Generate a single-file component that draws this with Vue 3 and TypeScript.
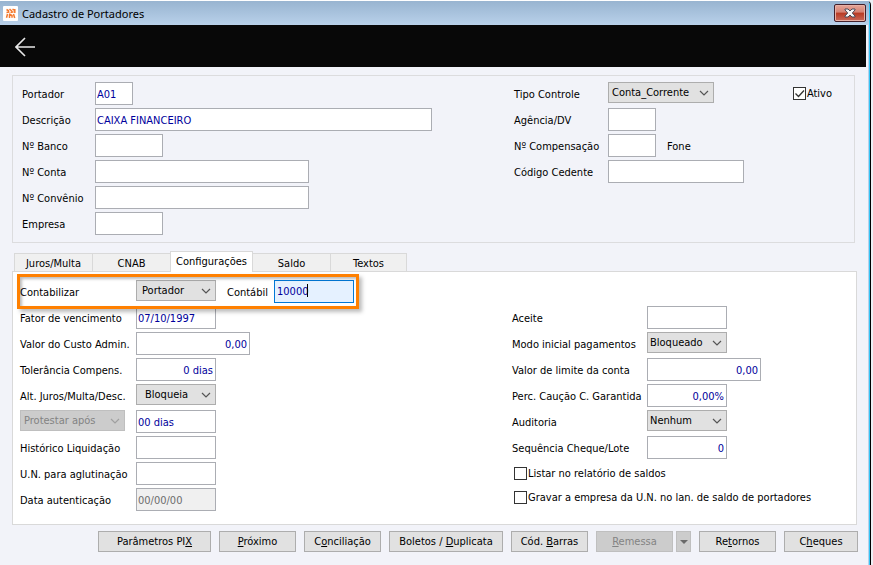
<script setup lang="ts">
import { reactive, ref } from 'vue'

interface Control {
  id: string
  kind: 'text' | 'select' | 'label' | 'check'
  size?: string
  text?: string
  name?: string
  right?: boolean
  disabled?: boolean
  focused?: boolean
  end?: boolean
  indent?: boolean
}
interface Row {
  label?: string
  lead?: Control
  compact?: boolean
  controls: Control[]
}
interface Group {
  id: string
  tabs: boolean
  columns: Row[][]
}

const groups: Group[] = [
  {
    id: 'dados',
    tabs: false,
    columns: [
      [
        { label: 'Portador', controls: [{ id: 'portador', kind: 'text', size: 'w38' }] },
        { label: 'Descrição', controls: [{ id: 'descricao', kind: 'text', size: 'w337' }] },
        { label: 'Nº Banco', controls: [{ id: 'banco', kind: 'text', size: 'w68' }] },
        { label: 'Nº Conta', controls: [{ id: 'conta', kind: 'text', size: 'w214' }] },
        { label: 'Nº Convênio', controls: [{ id: 'convenio', kind: 'text', size: 'w214' }] },
        { label: 'Empresa', controls: [{ id: 'empresa', kind: 'text', size: 'w68' }] },
      ],
      [
        {
          label: 'Tipo Controle',
          controls: [
            { id: 'tipo', kind: 'select', size: 'w106' },
            { id: 'ativo', kind: 'check', text: 'Ativo', end: true },
          ],
        },
        { label: 'Agência/DV', controls: [{ id: 'agencia', kind: 'text', size: 'w48' }] },
        {
          label: 'Nº Compensação',
          controls: [
            { id: 'compensacao', kind: 'text', size: 'w48' },
            { id: 'fone', kind: 'label', text: 'Fone' },
          ],
        },
        { label: 'Código Cedente', controls: [{ id: 'cedente', kind: 'text', size: 'w136' }] },
      ],
    ],
  },
  {
    id: 'config',
    tabs: true,
    columns: [
      [
        {
          label: 'Contabilizar',
          controls: [
            { id: 'contabilizar', kind: 'select', size: 'w80' },
            { id: 'contabil', kind: 'label', text: 'Contábil' },
            { id: 'contabil', kind: 'text', size: 'w80', focused: true },
          ],
        },
        { label: 'Fator de vencimento', controls: [{ id: 'fator', kind: 'text', size: 'w80' }] },
        { label: 'Valor do Custo Admin.', controls: [{ id: 'custo', kind: 'text', size: 'w114', right: true }] },
        { label: 'Tolerância Compens.', controls: [{ id: 'tolerancia', kind: 'text', size: 'w80', right: true }] },
        { label: 'Alt. Juros/Multa/Desc.', controls: [{ id: 'juros', kind: 'select', size: 'w80', indent: true }] },
        {
          lead: { id: 'protestar', kind: 'select', size: 'w105', disabled: true, name: 'Protestar' },
          controls: [{ id: 'dias', kind: 'text', size: 'w80', name: 'Dias para protesto' }],
        },
        { label: 'Histórico Liquidação', controls: [{ id: 'historico', kind: 'text', size: 'w80' }] },
        { label: 'U.N. para aglutinação', controls: [{ id: 'un', kind: 'text', size: 'w80' }] },
        { label: 'Data autenticação', controls: [{ id: 'data', kind: 'text', size: 'w80', disabled: true }] },
      ],
      [
        { label: 'Aceite', controls: [{ id: 'aceite', kind: 'text', size: 'w80' }] },
        { label: 'Modo inicial pagamentos', controls: [{ id: 'modo', kind: 'select', size: 'w80' }] },
        { label: 'Valor de limite da conta', controls: [{ id: 'limite', kind: 'text', size: 'w114', right: true }] },
        { label: 'Perc. Caução C. Garantida', controls: [{ id: 'caucao', kind: 'text', size: 'w80', right: true }] },
        { label: 'Auditoria', controls: [{ id: 'auditoria', kind: 'select', size: 'w80' }] },
        { label: 'Sequência Cheque/Lote', controls: [{ id: 'sequencia', kind: 'text', size: 'w80', right: true }] },
        { compact: true, controls: [{ id: 'listar', kind: 'check', text: 'Listar no relatório de saldos' }] },
        {
          compact: true,
          controls: [{ id: 'gravar', kind: 'check', text: 'Gravar a empresa da U.N. no lan. de saldo de portadores' }],
        },
      ],
    ],
  },
]

const values = reactive<Record<string, string>>({
  portador: 'A01',
  descricao: 'CAIXA FINANCEIRO',
  contabil: '10000',
  fator: '07/10/1997',
  custo: '0,00',
  tolerancia: '0 dias',
  dias: '00 dias',
  data: '00/00/00',
  limite: '0,00',
  caucao: '0,00%',
  sequencia: '0',
  tipo: 'Conta_Corrente',
  contabilizar: 'Portador',
  juros: 'Bloqueia',
  protestar: 'Protestar após',
  modo: 'Bloqueado',
  auditoria: 'Nenhum',
})
const options: Record<string, string[]> = {
  tipo: ['Conta_Corrente'],
  contabilizar: ['Portador'],
  juros: ['Bloqueia'],
  protestar: ['Protestar após'],
  modo: ['Bloqueado'],
  auditoria: ['Nenhum'],
}
const checks = reactive<Record<string, boolean>>({ ativo: true, listar: false, gravar: false })

const tabs = ['Juros/Multa', 'CNAB', 'Configurações', 'Saldo', 'Textos']
const activeTab = ref('Configurações')

/* Each caption is split around its underlined access key. */
const actions = [
  { parts: ['Parâmetros PI', 'X', ''], size: 'w113' },
  { parts: ['', 'P', 'róximo'], size: 'w77' },
  { parts: ['C', 'o', 'nciliação'], size: 'w77' },
  { parts: ['Boletos / ', 'D', 'uplicata'], size: 'w114' },
  { parts: ['Cód. ', 'B', 'arras'], size: 'w77' },
  { parts: ['', 'R', 'emessa'], size: 'w77', disabled: true, menu: true },
  { parts: ['Re', 't', 'ornos'], size: 'w77' },
  { parts: ['C', 'h', 'eques'], size: 'w74' },
]
</script>

<template>
  <div class="window">
    <header class="titlebar">
      <svg class="logo" viewBox="0 0 15 15" aria-hidden="true">
        <rect width="15" height="15" rx="1" fill="#fff" />
        <path
          d="M3.500 3.500l2.500 1.500M6.500 3l2.500 2.200M9.500 3.200L12 4.500M3.500 6.500l3-.5M7.500 6.500l3-.8M11.800 3v4M3.500 11.800l1-3.800M6.500 12V9M6 8l3 1.500M9 11.800V9M11.700 12L10.500 8"
          fill="none"
          stroke="#f47a30"
          stroke-width="1.500"
        />
      </svg>
      <h1>Cadastro de Portadores</h1>
      <button class="close" type="button" aria-label="Fechar">
        <svg viewBox="0 0 12 10" aria-hidden="true">
          <path d="M1 1h3l2 2 2-2h3v1L8.300 5 11 8v1H8L6 7 4 9H1V8l2.700-3L1 2z" fill="#f8f8f8" stroke="#4b4c5a" stroke-width="1" />
        </svg>
      </button>
    </header>
    <div class="toolbar">
      <button class="back" type="button" aria-label="Voltar">
        <svg viewBox="0 0 20 20" aria-hidden="true">
          <path d="M10 1L1 10l9 9M1 10h19" fill="none" stroke="#e8e8e8" stroke-width="1.600" />
        </svg>
      </button>
    </div>

    <main class="content">
      <section v-for="group in groups" :key="group.id" :class="['group', group.id]">
        <div v-if="group.tabs" class="tabs" role="tablist">
          <button
            v-for="tab in tabs"
            :key="tab"
            type="button"
            role="tab"
            :aria-selected="tab === activeTab"
            :class="['tab', { active: tab === activeTab }]"
            @click="activeTab = tab"
          >{{ tab }}</button>
        </div>
        <div class="box">
          <div v-for="(rows, c) in group.columns" :key="c" :class="['column', c ? 'second' : 'first']">
            <div v-for="(row, r) in rows" :key="r" :class="['row', { compact: row.compact }]">
              <div v-if="row.lead" class="lead">
                <div :class="['dropdown', row.lead.size, { disabled: row.lead.disabled }]">
                  <select :id="row.lead.id" v-model="values[row.lead.id]" :aria-label="row.lead.name" :disabled="row.lead.disabled">
                    <option v-for="o in options[row.lead.id]" :key="o">{{ o }}</option>
                  </select>
                  <svg viewBox="0 0 10 6" aria-hidden="true"><path d="M1 1l4 4 4-4" /></svg>
                </div>
              </div>
              <label v-else-if="row.label" class="lead" :for="row.controls[0].id">{{ row.label }}</label>
              <template v-for="f in row.controls" :key="f.kind + f.id">
                <div v-if="f.kind === 'text'" :class="['field', f.size]">
                  <input
                    :id="f.id"
                    v-model="values[f.id]"
                    type="text"
                    :aria-label="f.name"
                    :disabled="f.disabled"
                    :class="{ right: f.right, focused: f.focused }"
                  />
                  <span v-if="f.focused" class="caret"></span>
                </div>
                <div v-else-if="f.kind === 'select'" :class="['dropdown', f.size, { indent: f.indent }]">
                  <select :id="f.id" v-model="values[f.id]">
                    <option v-for="o in options[f.id]" :key="o">{{ o }}</option>
                  </select>
                  <svg viewBox="0 0 10 6" aria-hidden="true"><path d="M1 1l4 4 4-4" /></svg>
                </div>
                <label v-else-if="f.kind === 'label'" class="inline-label" :for="f.id">{{ f.text }}</label>
                <label v-else :class="['check', { end: f.end }]">
                  <input v-model="checks[f.id]" type="checkbox" />
                  <svg viewBox="0 0 13 13" aria-hidden="true">
                    <path v-if="checks[f.id]" d="M2.500 6.500l3 3 5.500-6" />
                  </svg>
                  <span>{{ f.text }}</span>
                </label>
              </template>
            </div>
          </div>
          <div v-if="group.tabs" class="highlight"></div>
        </div>
      </section>
    </main>

    <footer class="actions">
      <template v-for="a in actions" :key="a.parts.join('')">
        <div class="action-set">
          <button type="button" :class="['action', a.size]" :disabled="a.disabled">
            {{ a.parts[0] }}<u>{{ a.parts[1] }}</u>{{ a.parts[2] }}
          </button>
          <button v-if="a.menu" type="button" class="action more" disabled aria-label="Opções de remessa">
            <svg viewBox="0 0 8 4" aria-hidden="true"><path d="M0 0h8L4 4z" fill="#6a6a6a" /></svg>
          </button>
        </div>
      </template>
    </footer>
  </div>
</template>

<style>
body {
  background: #eef0f5;
}
</style>

<style scoped>
* {
  box-sizing: border-box;
}
.window {
  display: flex;
  flex-direction: column;
  min-height: 100vh;
  margin-right: 2px;
  border-top: 1px solid #fff;
  border-right: 1px solid #000;
  border-top-right-radius: 5px;
  background: #f2f3f9;
  box-shadow: inset -1px 0 #35c5f5, inset -2px 0 #b9d1ea;
  color: #000;
  font: 11px/14px "DejaVu Sans Condensed", "Noto Sans", sans-serif;
}
button,
input,
select {
  margin: 0;
  font: inherit;
  color: inherit;
  border-radius: 0;
}
.titlebar {
  display: flex;
  align-items: center;
  height: 24px;
  margin-right: 1px;
  padding: 0 3px;
  background: linear-gradient(#98b4d0, #b9d1ea);
}
.logo {
  width: 15px;
  height: 15px;
}
.titlebar h1 {
  margin: 0 0 0 4px;
  padding-top: 1px;
  font: 11px/16px "Noto Sans", sans-serif;
}
.close {
  display: grid;
  place-items: center;
  width: 32px;
  height: 18px;
  margin-left: auto;
  padding: 0;
  border: 1px solid #43202b;
  border-radius: 2px;
  background: linear-gradient(#e5a597, #d58274 45%, #b83a23 50%, #c9695a);
  box-shadow: inset 0 0 0 1px #e6b0a5;
}
.close svg {
  width: 12px;
  height: 10px;
}
.toolbar {
  display: flex;
  align-items: center;
  height: 42px;
  margin-right: 4px;
  padding: 2px 0 0 15px;
  background: #080808;
}
.back {
  display: flex;
  padding: 0;
  border: 0;
  background: none;
}
.back svg {
  width: 20px;
  height: 20px;
}
.content {
  padding: 8px 13px 0 12px;
}
.box {
  display: grid;
  grid-template-columns: minmax(0, 492fr) minmax(0, 340fr);
  border: 1px solid #dcdcde;
}
.dados .box {
  margin-right: 2px;
  padding: 6px 0 7px 9px;
}
.config .box {
  position: relative;
  grid-template-columns: minmax(0, 492fr) minmax(0, 344fr);
  padding: 8px 0 13px 7px;
  border-color: #d9d9d9;
  background: #fff;
}
.column {
  display: flex;
  flex-direction: column;
  gap: 3px;
}
.config .second {
  padding-top: 26px;
}
.row {
  display: flex;
  height: 23px;
  align-items: flex-start;
}
.row.compact {
  height: 21px;
}
.lead {
  flex: none;
  width: 73px;
  line-height: 26px;
  white-space: nowrap;
}
.dados .second .lead {
  width: 94px;
}
.config .first .lead {
  width: 116px;
}
.config .second .lead {
  width: 135px;
}
.inline-label {
  width: 47px;
  margin-left: 11px;
  line-height: 26px;
}
.field {
  position: relative;
}
.field input {
  display: block;
  width: 100%;
  height: 23px;
  padding: 1px 2px 0 1px;
  border: 1px solid #abadb3;
  outline: 0;
  background: #fff;
  color: #00009c;
}
.field .right {
  text-align: right;
}
.field input:disabled {
  background: #f0f0f0;
  color: #6d6d6d;
}
.field .focused {
  padding: 0 2px 1px;
  border-color: #0078d7;
  background: #e5f1ff;
}
.caret {
  position: absolute;
  top: 4px;
  left: 33px;
  width: 1px;
  height: 13px;
  background: #000;
}
.dropdown {
  display: grid;
  grid-template-columns: 1fr 18px;
  align-items: center;
  height: 21px;
  line-height: 14px;
}
.dropdown select {
  grid-area: 1 / 1 / 2 / 3;
  width: 100%;
  height: 21px;
  padding: 1px 0 0 3px;
  appearance: none;
  border: 1px solid #adadad;
  background: #e1e1e1;
}
.config .second .dropdown select,
.config .dropdown.disabled select {
  padding-left: 2px;
}
.config .first .dropdown.indent select {
  padding-left: 8px;
}
.config .first .dropdown select {
  padding-left: 5px;
}
.config .first .dropdown.disabled select {
  padding-left: 3px;
}
.config .first .dropdown.indent select {
  padding-left: 8px;
}
.dropdown svg {
  grid-area: 1 / 2 / 2 / 3;
  width: 10px;
  height: 6px;
  margin-left: 3px;
  fill: none;
  stroke: #555;
  stroke-width: 1.2;
  pointer-events: none;
}
.dropdown.disabled select {
  border-color: #bfbfbf;
  background: #ccc;
  color: #838383;
  opacity: 1;
}
.dropdown.disabled svg {
  stroke: #a0a0a0;
}
.check {
  display: grid;
  grid-template-columns: 13px auto;
  column-gap: 1px;
  align-items: center;
  height: 23px;
  margin-left: 2px;
  white-space: nowrap;
}
.check span {
  padding-top: 1px;
}
.check.end {
  margin-left: auto;
  padding-right: 22px;
}
.check input {
  grid-area: 1 / 1;
  width: 13px;
  height: 13px;
  appearance: none;
  border: 1px solid #333;
  background: #fff;
}
.check svg {
  grid-area: 1 / 1;
  width: 13px;
  height: 13px;
  fill: none;
  stroke: #333;
  stroke-width: 1.3;
  pointer-events: none;
}
.tabs {
  display: flex;
  align-items: flex-end;
  height: 20px;
  margin-top: 8px;
  padding-left: 2px;
}
.tab {
  width: 78px;
  height: 18px;
  padding: 2px 0 0;
  border: 1px solid #d9d9d9;
  border-bottom: 0;
  border-right-width: 0;
  background: #f0f0f0;
}
.tab:last-child {
  border-right-width: 1px;
}
.tab.active {
  z-index: 1;
  width: 83px;
  height: 21px;
  margin-bottom: -1px;
  padding: 0;
  border-right-width: 1px;
  background: #fff;
}
.tab.active ~ .tab {
  width: 77px;
}
.tab.active + .tab {
  border-left: 0;
}
.highlight {
  position: absolute;
  top: 2px;
  left: 4px;
  width: 342px;
  height: 35px;
  border: 3px solid #ff8000;
  box-shadow: 3px 3px 4px #0004, inset 2px 2px 3px #0004;
  pointer-events: none;
}
.actions {
  display: flex;
  justify-content: flex-end;
  gap: 8px;
  padding: 6px 12px 13px;
}
.action-set {
  display: flex;
  gap: 3px;
}
.action {
  height: 21px;
  padding: 1px 0 0;
  border: 1px solid #adadad;
  background: #e1e1e1;
  white-space: nowrap;
}
.action:disabled {
  border-color: #bfbfbf;
  background: #ccc;
  color: #838383;
}
.action.more {
  display: grid;
  place-items: center;
  width: 15px;
}
.more svg {
  width: 8px;
  height: 4px;
}
.w38 { width: 38px; }
.w48 { width: 48px; }
.w68 { width: 68px; }
.w74 { width: 74px; }
.w77 { width: 77px; }
.w80 { width: 80px; }
.w105 { width: 105px; }
.w106 { width: 106px; }
.w113 { width: 113px; }
.w114 { width: 114px; }
.w136 { width: 136px; }
.w214 { width: 214px; }
.w337 { width: 337px; }
</style>
